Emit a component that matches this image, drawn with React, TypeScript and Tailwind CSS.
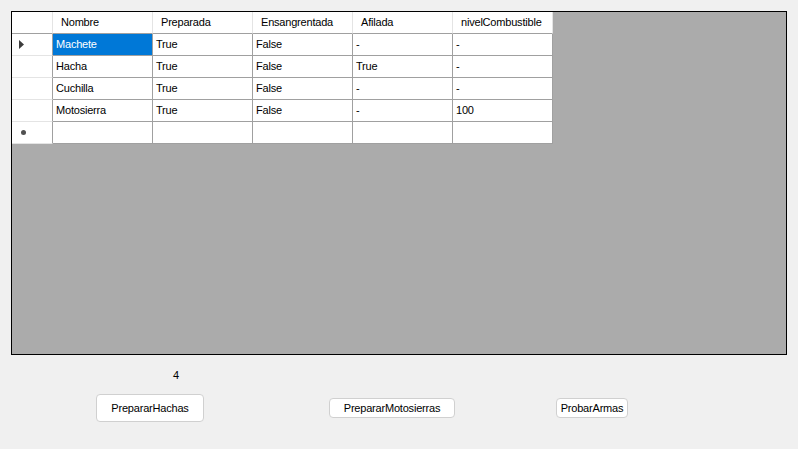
const columns = ["Nombre", "Preparada", "Ensangrentada", "Afilada", "nivelCombustible"];

const rows = [
  ["Machete", "True", "False", "-", "-"],
  ["Hacha", "True", "False", "True", "-"],
  ["Cuchilla", "True", "False", "-", "-"],
  ["Motosierra", "True", "False", "-", "100"],
];

function DataGrid() {
  return (
    <div className="grid grid-cols-[41px_repeat(5,100px)] auto-rows-[22px] w-[541px] bg-white">
      {/* header row */}
      <div className="border-r border-b border-r-[#e4e4e4] border-b-[#a0a0a0] bg-white" />
      {columns.map((c) => (
        <div
          key={c}
          className="flex items-center pl-[8px] border-r border-b border-r-[#e4e4e4] border-b-[#a0a0a0] bg-white whitespace-nowrap overflow-hidden"
        >
          {c}
        </div>
      ))}

      {rows.map((r, ri) => (
        <Row key={ri} cells={r} current={ri === 0} />
      ))}

      {/* new row */}
      <div className="flex items-center pl-[9px] border-r border-b border-r-[#a0a0a0] border-b-[#e4e4e4] bg-white">
        <span className="w-[5px] h-[5px] bg-[#505050] rounded-full" />
      </div>
      {columns.map((c) => (
        <div key={c} className="border-r border-b border-[#a0a0a0] bg-white" />
      ))}
    </div>
  );
}

function Row({ cells, current }: { cells: string[]; current: boolean }) {
  return (
    <>
      <div className="flex items-center pl-[7px] border-r border-b border-r-[#a0a0a0] border-b-[#e4e4e4] bg-white">
        {current && (
          <svg width="5" height="9" viewBox="0 0 5 9">
            <path d="M0 0 L5 4.5 L0 9 Z" fill="#3c3c3c" />
          </svg>
        )}
      </div>
      {cells.map((v, i) => (
        <div
          key={i}
          className={
            "flex items-center pl-[3px] border-r border-b border-[#a0a0a0] " +
            (current && i === 0 ? "bg-[#0078d7] text-white" : "bg-white text-black")
          }
        >
          {v}
        </div>
      ))}
    </>
  );
}

export default function App() {
  return (
    <div
      className="w-[798px] h-[449px] bg-[#f0f0f0] pt-[11px] pl-[11px] text-[11px] tracking-[-0.2px] text-black overflow-hidden"
      style={{ fontFamily: '"Liberation Sans", Arial, sans-serif' }}
    >
      <div className="w-[776px] h-[344px] border border-black bg-[#ababab]">
        <DataGrid />
      </div>

      <div className="pl-[162px] pt-[13px] h-[39px] leading-[14px]">4</div>

      <div className="flex items-start">
        <button className="ml-[85px] w-[108px] h-[28px] bg-white border border-[#d0d0d0] rounded-[4px]">
          PrepararHachas
        </button>
        <button className="ml-[125px] mt-[4px] w-[126px] h-[20px] bg-white border border-[#d0d0d0] rounded-[4px]">
          PrepararMotosierras
        </button>
        <button className="ml-[101px] mt-[4px] w-[72px] h-[20px] bg-white border border-[#d0d0d0] rounded-[4px]">
          ProbarArmas
        </button>
      </div>
    </div>
  );
}
